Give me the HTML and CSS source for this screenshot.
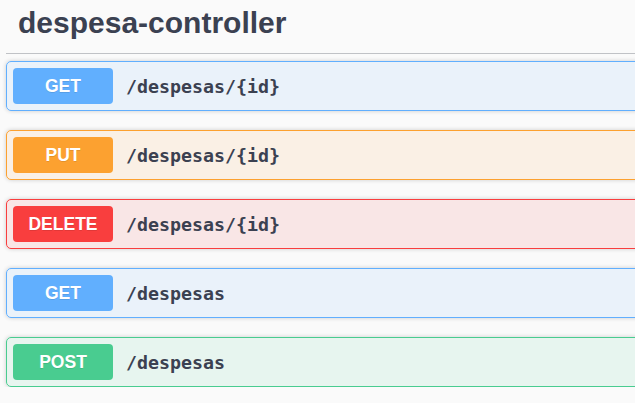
FILE: index.html
```html
<!DOCTYPE html>
<html>
<head>
<meta charset="utf-8">
<link rel="stylesheet" href="styles.css">
</head>
<body>
<div class="wrapper">
  <h3 class="tag">despesa-controller</h3>
  <div class="ops">
    <div class="op get"><span class="method">GET</span><span class="path">/despesas/{id}</span></div>
    <div class="op put"><span class="method">PUT</span><span class="path">/despesas/{id}</span></div>
    <div class="op delete"><span class="method">DELETE</span><span class="path">/despesas/{id}</span></div>
    <div class="op get"><span class="method">GET</span><span class="path">/despesas</span></div>
    <div class="op post"><span class="method">POST</span><span class="path">/despesas</span></div>
  </div>
</div>
</body>
</html>
```
FILE: styles.css
```css
html, body {
  margin: 0;
  padding: 0;
  background: #fafafa;
  overflow: hidden;
}
.wrapper {
  padding-left: 6px;
  width: 720px;
}
.tag {
  margin: 0 0 7px 0;
  padding: 5px 20px 13px 12px;
  font-family: "Liberation Sans", Arial, sans-serif;
  font-size: 30px;
  line-height: 35px;
  font-weight: bold;
  color: #3b4151;
  border-bottom: 1px solid rgba(59, 65, 81, 0.3);
}
.ops {
  display: flex;
  flex-direction: column;
  gap: 19px;
}
.op {
  display: flex;
  align-items: center;
  padding: 6px;
  border: 1px solid;
  border-radius: 5px;
  box-shadow: 0 0 4px rgba(0, 0, 0, 0.19);
}
.method {
  width: 100px;
  height: 36px;
  border-radius: 4px;
  display: flex;
  align-items: center;
  justify-content: center;
  font-family: "Liberation Sans", Arial, sans-serif;
  font-size: 17.5px;
  font-weight: bold;
  color: #fff;
  text-shadow: 0 1px 0 rgba(0, 0, 0, 0.1);
}
.path {
  margin-left: 13px;
  font-family: "DejaVu Sans Mono", monospace;
  font-size: 18.3px;
  font-weight: 600;
  color: #3b4151;
}
.get { background: rgba(97, 175, 254, 0.1); border-color: #61affe; }
.get .method { background: #61affe; }
.put { background: rgba(252, 161, 48, 0.1); border-color: #fca130; }
.put .method { background: #fca130; }
.delete { background: rgba(249, 62, 62, 0.1); border-color: #f93e3e; }
.delete .method { background: #f93e3e; }
.post { background: rgba(73, 204, 144, 0.1); border-color: #49cc90; }
.post .method { background: #49cc90; }
```
